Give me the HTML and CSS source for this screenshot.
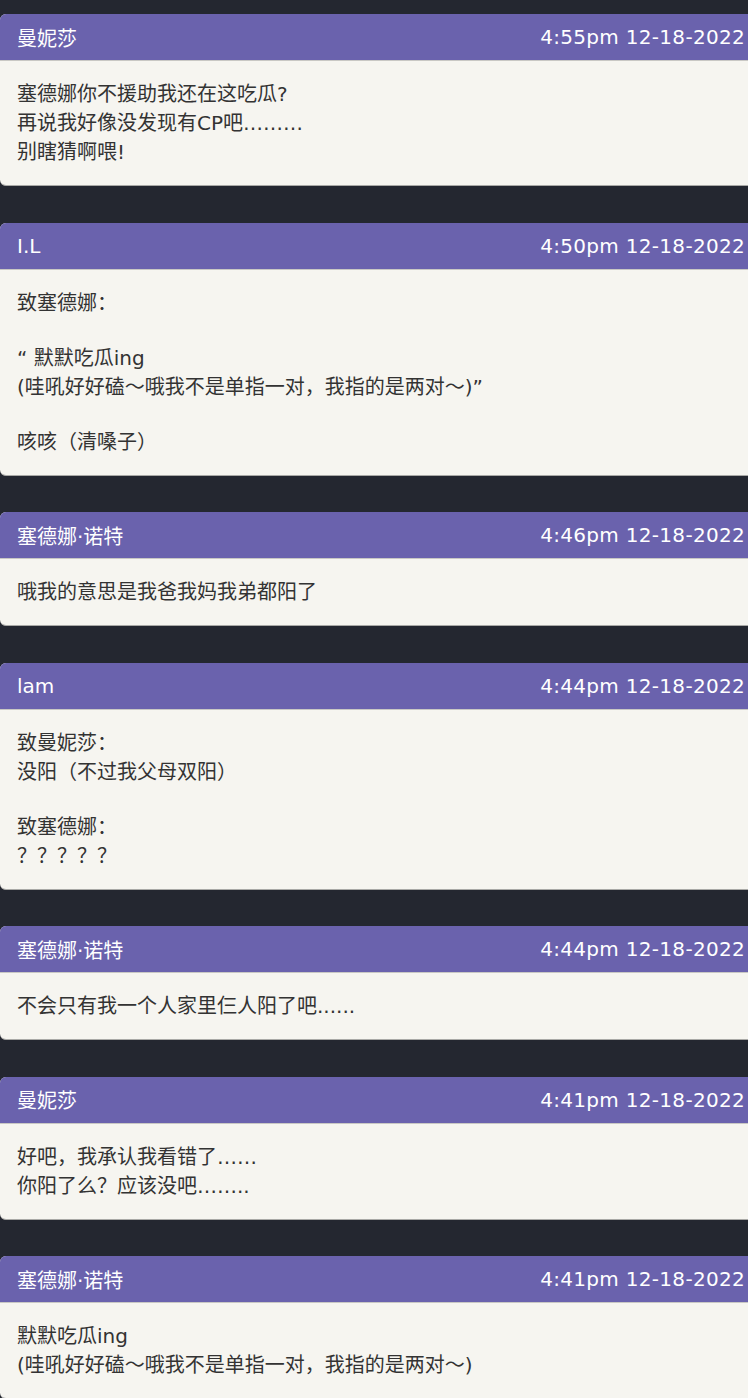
FILE: index.html
```html
<!DOCTYPE html>
<html lang="zh">
<head>
  <meta charset="UTF-8">
  <title>留言板</title>
  <link rel="stylesheet" href="styles.css">
</head>
<body>
  <div class="board">

    <div class="post">
      <div class="post-head">
        <span class="author">曼妮莎</span>
        <span class="time">4:55pm 12-18-2022</span>
      </div>
      <div class="post-body">
        <p>塞德娜你不援助我还在这吃瓜?</p>
        <p>再说我好像没发现有CP吧………</p>
        <p>别瞎猜啊喂!</p>
      </div>
    </div>

    <div class="post">
      <div class="post-head">
        <span class="author">I.L</span>
        <span class="time">4:50pm 12-18-2022</span>
      </div>
      <div class="post-body">
        <p>致塞德娜：</p>
        <p class="blank"></p>
        <p>“ 默默吃瓜ing</p>
        <p>(哇吼好好磕～哦我不是单指一对，我指的是两对～)”</p>
        <p class="blank"></p>
        <p>咳咳（清嗓子）</p>
      </div>
    </div>

    <div class="post">
      <div class="post-head">
        <span class="author">塞德娜·诺特</span>
        <span class="time">4:46pm 12-18-2022</span>
      </div>
      <div class="post-body">
        <p>哦我的意思是我爸我妈我弟都阳了</p>
      </div>
    </div>

    <div class="post">
      <div class="post-head">
        <span class="author">lam</span>
        <span class="time">4:44pm 12-18-2022</span>
      </div>
      <div class="post-body">
        <p>致曼妮莎：</p>
        <p>没阳（不过我父母双阳）</p>
        <p class="blank"></p>
        <p>致塞德娜：</p>
        <p>？？？？？</p>
      </div>
    </div>

    <div class="post">
      <div class="post-head">
        <span class="author">塞德娜·诺特</span>
        <span class="time">4:44pm 12-18-2022</span>
      </div>
      <div class="post-body">
        <p>不会只有我一个人家里仨人阳了吧......</p>
      </div>
    </div>

    <div class="post">
      <div class="post-head">
        <span class="author">曼妮莎</span>
        <span class="time">4:41pm 12-18-2022</span>
      </div>
      <div class="post-body">
        <p>好吧，我承认我看错了……</p>
        <p>你阳了么？应该没吧……..</p>
      </div>
    </div>

    <div class="post">
      <div class="post-head">
        <span class="author">塞德娜·诺特</span>
        <span class="time">4:41pm 12-18-2022</span>
      </div>
      <div class="post-body">
        <p>默默吃瓜ing</p>
        <p>(哇吼好好磕～哦我不是单指一对，我指的是两对～)</p>
      </div>
    </div>

  </div>
</body>
</html>
```

FILE: styles.css
```css
body {
  margin: 0;
  background: #242730;
  font-family: "DejaVu Sans", "Noto Sans CJK SC", sans-serif;
  font-size: 20px;
}

.board {
  padding-top: 14px;
}

.post {
  margin-bottom: 36.5px;
  border-radius: 6px 0 0 6px;
  overflow: hidden;
  background: #f6f5f0;
  border-bottom: 1px solid #a9a9a6;
}

.post-head {
  display: flex;
  justify-content: space-between;
  align-items: center;
  height: 46px;
  padding: 0 3px 0 17px;
  background: #6a62ad;
  color: #fff;
  border-bottom: 1px solid #c9c8c4;
}

.time {
  letter-spacing: 0.3px;
}

.post-body {
  padding: 19px 17px 18px;
  color: #333;
  line-height: 29px;
}

.post-body p {
  margin: 0;
}

.post-body .blank {
  height: 26px;
}
```
